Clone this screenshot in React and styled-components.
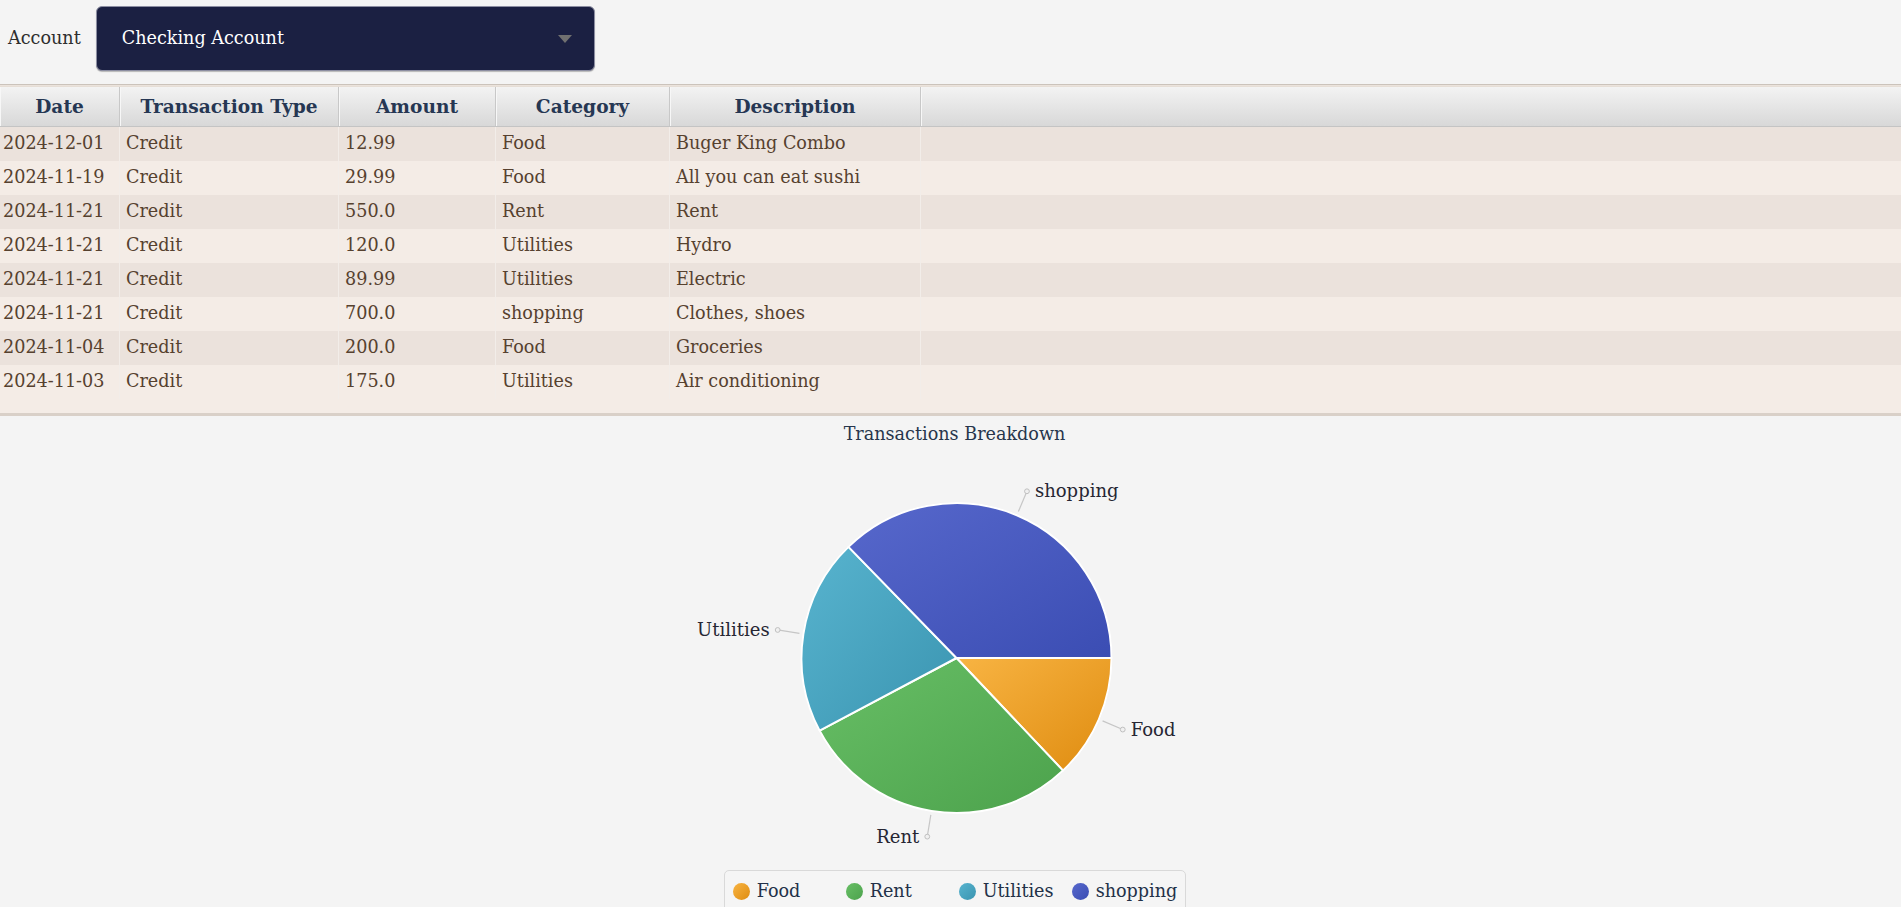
import React from 'react'
import styled, { createGlobalStyle } from 'styled-components'

const transactions = [
  { date: '2024-12-01', type: 'Credit', amount: '12.99', category: 'Food', desc: 'Buger King Combo' },
  { date: '2024-11-19', type: 'Credit', amount: '29.99', category: 'Food', desc: 'All you can eat sushi' },
  { date: '2024-11-21', type: 'Credit', amount: '550.0', category: 'Rent', desc: 'Rent' },
  { date: '2024-11-21', type: 'Credit', amount: '120.0', category: 'Utilities', desc: 'Hydro' },
  { date: '2024-11-21', type: 'Credit', amount: '89.99', category: 'Utilities', desc: 'Electric' },
  { date: '2024-11-21', type: 'Credit', amount: '700.0', category: 'shopping', desc: 'Clothes, shoes' },
  { date: '2024-11-04', type: 'Credit', amount: '200.0', category: 'Food', desc: 'Groceries' },
  { date: '2024-11-03', type: 'Credit', amount: '175.0', category: 'Utilities', desc: 'Air conditioning' },
]

const columns = [
  { key: 'date', title: 'Date', width: 120, pad: 3 },
  { key: 'type', title: 'Transaction Type', width: 219 },
  { key: 'amount', title: 'Amount', width: 157 },
  { key: 'category', title: 'Category', width: 174 },
  { key: 'desc', title: 'Description', width: 251 },
]

const slices = [
  { name: 'Food', from: '#f8b443', to: '#df8c10', label: 'start' },
  { name: 'Rent', from: '#68bf66', to: '#4ca24c', label: 'end' },
  { name: 'Utilities', from: '#58b4cf', to: '#3a94b0', label: 'end' },
  { name: 'shopping', from: '#5768cc', to: '#3b4db3', label: 'start' },
]

const GlobalStyle = createGlobalStyle`
  body {
    margin: 0;
    background: #f4f4f4;
    font-family: "DejaVu Serif", "Liberation Serif", serif;
    font-size: 17.6px;
  }
`

const Page = styled.div`
  width: 100%;
`

const TopBar = styled.div`
  display: flex;
  align-items: center;
  height: 84px;
  padding: 6px 0 14px 8px;
  gap: 15px;
  box-sizing: border-box;
`

const FieldLabel = styled.span`
  color: #2e2e2e;
`

const Select = styled.div`
  box-sizing: border-box;
  width: 499px;
  height: 65px;
  padding: 0 22px 0 25px;
  display: flex;
  align-items: center;
  justify-content: space-between;
  background: #1b2042;
  border: 1px solid #8c8ea2;
  border-radius: 6px;
  box-shadow: 0 1px 1px rgba(0, 0, 0, 0.25);
  color: #ffffff;
`

const Caret = styled.span`
  width: 0;
  height: 0;
  border-left: 7px solid transparent;
  border-right: 7px solid transparent;
  border-top: 8px solid #707070;
  margin-top: 2px;
`

const TableBox = styled.div`
  border-top: 1px solid #cbc3bb;
  border-bottom: 3px solid #d9d0c8;
  padding-top: 1px;
  background: #ebe3dc;
`

const HeaderRow = styled.div`
  display: flex;
  height: 41px;
  background: linear-gradient(#f3f3f3, #d8d8d8);
  border-top: 1px solid #e6ded6;
  border-bottom: 1px solid #c4c4c4;
  box-sizing: border-box;
`

const HeaderCell = styled.div`
  flex: ${(p) => (p.$width ? `0 0 ${p.$width}px` : '1')};
  box-sizing: border-box;
  display: flex;
  align-items: center;
  justify-content: center;
  border-right: ${(p) => (p.$width ? '1px solid #c8c8c8' : 'none')};
  box-shadow: inset 1px 0 #f7f7f7;
  font-weight: bold;
  font-size: 18.6px;
  color: #263753;
`

const Body = styled.div`
  height: 286px;
  background: #f4ece6;
`

const Row = styled.div`
  display: flex;
  height: 34px;
  background: ${(p) => (p.$odd ? '#ebe2dc' : '#f4ece6')};
`

const Cell = styled.div`
  flex: ${(p) => (p.$width ? `0 0 ${p.$width}px` : '1')};
  box-sizing: border-box;
  padding-left: ${(p) => p.$pad}px;
  line-height: 33px;
  border-right: ${(p) => (p.$width ? '1px solid #f2ede9' : 'none')};
  color: #56412f;
  white-space: nowrap;
  overflow: hidden;
`

const ChartSection = styled.section`
  display: flex;
  flex-direction: column;
  align-items: center;
  padding-top: 7px;
`

const ChartTitle = styled.div`
  line-height: 22px;
  color: #27364c;
  margin-left: 8px;
`

const PieSvg = styled.svg`
  display: block;
  margin-top: 12px;
  margin-left: -2px;
  overflow: visible;
`

const Legend = styled.div`
  display: grid;
  grid-template-columns: 113px 113px 113px auto;
  margin-top: 7px;
  margin-left: 9px;
  padding: 8px 8px 8px 8px;
  border: 1px solid #d9d9d9;
  border-radius: 5px;
  background: #f5f5f5;
`

const LegendItem = styled.div`
  display: flex;
  align-items: center;
  gap: 7px;
  height: 24px;
  color: #233148;
`

const Swatch = styled.span`
  width: 17px;
  height: 17px;
  border-radius: 50%;
  background: linear-gradient(135deg, ${(p) => p.$from}, ${(p) => p.$to});
`

const CX = 326.5
const CY = 201
const R = 155

const point = (deg, r) => {
  const a = (deg * Math.PI) / 180
  return [CX + r * Math.cos(a), CY + r * Math.sin(a)]
}

const PieChart = ({ data }) => {
  const total = data.reduce((s, d) => s + d.value, 0)
  let start = 0
  const parts = data.map((d) => {
    const sweep = (d.value / total) * 360
    const part = { ...d, start, end: start + sweep, mid: start + sweep / 2 }
    start += sweep
    return part
  })

  return (
    <PieSvg width="640" height="406" viewBox="0 0 640 406">
      <defs>
        {parts.map((p, i) => (
          <linearGradient key={p.name} id={`slice${i}`} x1="0" y1="0" x2="1" y2="1">
            <stop offset="0%" stopColor={p.from} />
            <stop offset="100%" stopColor={p.to} />
          </linearGradient>
        ))}
      </defs>
      <circle cx={CX} cy={CY} r={R + 1} fill="#e8e8e8" />
      {parts.map((p, i) => {
        const [x1, y1] = point(p.start, R)
        const [x2, y2] = point(p.end, R)
        const large = p.end - p.start > 180 ? 1 : 0
        return (
          <path
            key={p.name}
            d={`M${CX},${CY} L${x1},${y1} A${R},${R} 0 ${large} 1 ${x2},${y2} Z`}
            fill={`url(#slice${i})`}
            stroke="#ffffff"
            strokeWidth="2"
            strokeLinejoin="round"
          />
        )
      })}
      {parts.map((p) => {
        const [lx1, ly1] = point(p.mid, R + 4)
        const [lx2, ly2] = point(p.mid, R + 26)
        const dx = p.label === 'start' ? 8 : -8
        return (
          <g key={p.name}>
            <line x1={lx1} y1={ly1} x2={lx2} y2={ly2} stroke="#c6c6c6" strokeWidth="1.2" />
            <circle cx={lx2} cy={ly2} r="2.4" fill="#f0f0f0" stroke="#c0c0c0" strokeWidth="1" />
            <text
              x={lx2 + dx}
              y={ly2 + 6}
              textAnchor={p.label}
              fill="#262633"
              fontSize="18"
              fontFamily='"DejaVu Serif", serif'
            >
              {p.name}
            </text>
          </g>
        )
      })}
    </PieSvg>
  )
}

const App = () => {
  const sums = slices.map((s) => ({
    ...s,
    value: transactions
      .filter((t) => t.category === s.name)
      .reduce((acc, t) => acc + parseFloat(t.amount), 0),
  }))

  return (
    <Page>
      <GlobalStyle />
      <TopBar>
        <FieldLabel>Account</FieldLabel>
        <Select>
          <span>Checking Account</span>
          <Caret />
        </Select>
      </TopBar>

      <TableBox>
        <HeaderRow>
          {columns.map((c) => (
            <HeaderCell key={c.key} $width={c.width}>
              {c.title}
            </HeaderCell>
          ))}
          <HeaderCell />
        </HeaderRow>
        <Body>
          {transactions.map((t, i) => (
            <Row key={i} $odd={i % 2 === 0}>
              {columns.map((c) => (
                <Cell key={c.key} $width={c.width} $pad={c.pad ?? 6}>
                  {t[c.key]}
                </Cell>
              ))}
              <Cell $pad={0} />
            </Row>
          ))}
        </Body>
      </TableBox>

      <ChartSection>
        <ChartTitle>Transactions Breakdown</ChartTitle>
        <PieChart data={sums} />
        <Legend>
          {slices.map((s) => (
            <LegendItem key={s.name}>
              <Swatch $from={s.from} $to={s.to} />
              {s.name}
            </LegendItem>
          ))}
        </Legend>
      </ChartSection>
    </Page>
  )
}

export default App
